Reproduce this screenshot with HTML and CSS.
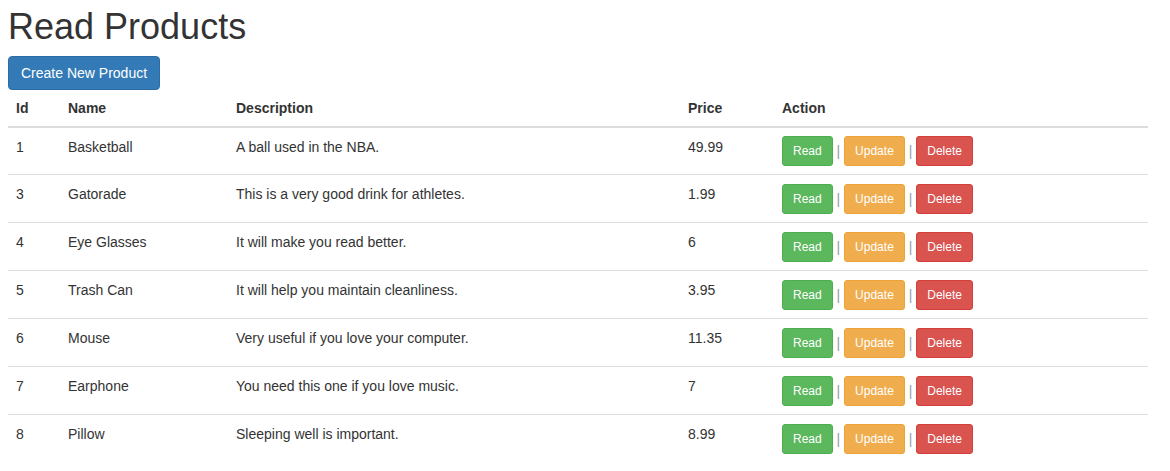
FILE: index.html
```html
<!DOCTYPE html>
<html lang="en">
<head>
<meta charset="utf-8">
<title>Read Products</title>
<link rel="stylesheet" href="styles.css">
</head>
<body>
<div class="container">
  <h1 class="page-title">Read Products</h1>
  <a class="btn btn-primary" href="#">Create New Product</a>
  <table class="table">
    <colgroup>
      <col class="c-id"><col class="c-name"><col class="c-desc"><col class="c-price"><col class="c-action">
    </colgroup>
    <thead>
      <tr><th>Id</th><th>Name</th><th>Description</th><th>Price</th><th>Action</th></tr>
    </thead>
    <tbody>
      <tr><td>1</td><td>Basketball</td><td>A ball used in the NBA.</td><td>49.99</td><td class="actions"><a class="btn btn-sm btn-success" href="#">Read</a> <span class="sep">|</span> <a class="btn btn-sm btn-warning" href="#">Update</a> <span class="sep">|</span> <a class="btn btn-sm btn-danger" href="#">Delete</a></td></tr>
      <tr><td>3</td><td>Gatorade</td><td>This is a very good drink for athletes.</td><td>1.99</td><td class="actions"><a class="btn btn-sm btn-success" href="#">Read</a> <span class="sep">|</span> <a class="btn btn-sm btn-warning" href="#">Update</a> <span class="sep">|</span> <a class="btn btn-sm btn-danger" href="#">Delete</a></td></tr>
      <tr><td>4</td><td>Eye Glasses</td><td>It will make you read better.</td><td>6</td><td class="actions"><a class="btn btn-sm btn-success" href="#">Read</a> <span class="sep">|</span> <a class="btn btn-sm btn-warning" href="#">Update</a> <span class="sep">|</span> <a class="btn btn-sm btn-danger" href="#">Delete</a></td></tr>
      <tr><td>5</td><td>Trash Can</td><td>It will help you maintain cleanliness.</td><td>3.95</td><td class="actions"><a class="btn btn-sm btn-success" href="#">Read</a> <span class="sep">|</span> <a class="btn btn-sm btn-warning" href="#">Update</a> <span class="sep">|</span> <a class="btn btn-sm btn-danger" href="#">Delete</a></td></tr>
      <tr><td>6</td><td>Mouse</td><td>Very useful if you love your computer.</td><td>11.35</td><td class="actions"><a class="btn btn-sm btn-success" href="#">Read</a> <span class="sep">|</span> <a class="btn btn-sm btn-warning" href="#">Update</a> <span class="sep">|</span> <a class="btn btn-sm btn-danger" href="#">Delete</a></td></tr>
      <tr><td>7</td><td>Earphone</td><td>You need this one if you love music.</td><td>7</td><td class="actions"><a class="btn btn-sm btn-success" href="#">Read</a> <span class="sep">|</span> <a class="btn btn-sm btn-warning" href="#">Update</a> <span class="sep">|</span> <a class="btn btn-sm btn-danger" href="#">Delete</a></td></tr>
      <tr><td>8</td><td>Pillow</td><td>Sleeping well is important.</td><td>8.99</td><td class="actions"><a class="btn btn-sm btn-success" href="#">Read</a> <span class="sep">|</span> <a class="btn btn-sm btn-warning" href="#">Update</a> <span class="sep">|</span> <a class="btn btn-sm btn-danger" href="#">Delete</a></td></tr>
    </tbody>
  </table>
</div>
</body>
</html>
```
FILE: styles.css
```css
* { box-sizing: border-box; }
html, body { margin: 0; padding: 0; background: #fff; }
body {
  font-family: "Liberation Sans", Arial, Helvetica, sans-serif;
  font-size: 14px;
  line-height: 20px;
  color: #333;
}
.container {
  width: 1140px;
  margin-left: 8px;
  padding-top: 7px;
}
.page-title {
  margin: 0 0 9px;
  font-size: 36px;
  font-weight: 500;
  line-height: 40px;
  color: #333;
}
.btn {
  display: inline-block;
  padding: 6px 12px;
  font-size: 14px;
  line-height: 20px;
  border: 1px solid transparent;
  border-radius: 4px;
  text-decoration: none;
  white-space: nowrap;
  vertical-align: middle;
  color: #fff;
}
.btn-sm {
  padding: 5px 10px;
  font-size: 12px;
  line-height: 18px;
  border-radius: 3px;
}
.btn-primary { background: #337ab7; border-color: #2e6da4; }
.btn-success { background: #5cb85c; border-color: #4cae4c; }
.btn-warning { background: #f0ad4e; border-color: #eea236; }
.btn-danger { background: #d9534f; border-color: #d43f3a; }
.table {
  width: 1140px;
  border-collapse: collapse;
  border-spacing: 0;
  table-layout: fixed;
}
.c-id { width: 52px; }
.c-name { width: 168px; }
.c-desc { width: 452px; }
.c-price { width: 94px; }
.c-action { width: 374px; }
.table th {
  text-align: left;
  font-weight: bold;
  padding: 8px;
  line-height: 20px;
  vertical-align: bottom;
  border-bottom: 2px solid #ddd;
}
.table td {
  padding: 9px 8px 8px;
  line-height: 20px;
  vertical-align: top;
  border-top: 1px solid #ddd;
  height: 48px;
}
.table tbody tr:first-child td { border-top: 0; height: 46px; }
.table td.actions { padding-top: 9px; line-height: 30px; }
.table tbody tr:first-child td.actions { padding-top: 8px; }
.actions .btn { vertical-align: top; }
.sep { color: #999; vertical-align: top; }
```
